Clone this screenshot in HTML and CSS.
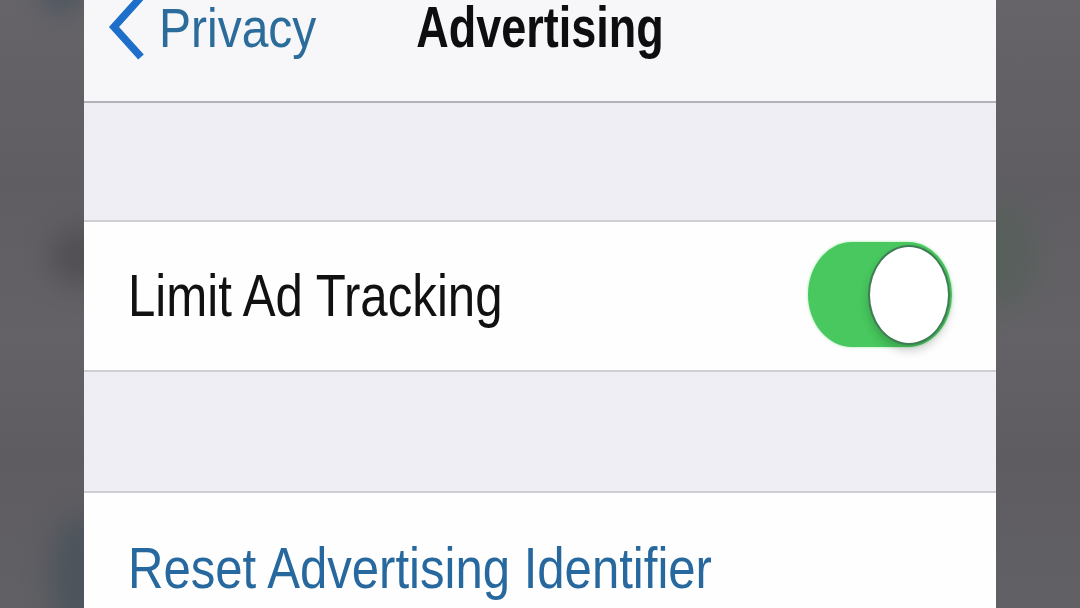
FILE: index.html
```html
<!DOCTYPE html>
<html lang="en">
<head>
<meta charset="utf-8">
<title>Advertising</title>
<link rel="stylesheet" href="styles.css">
</head>
<body>
  <div class="backdrop" aria-hidden="true">
    <span class="blob blob-top-left"></span>
    <span class="blob blob-mid-left"></span>
    <span class="blob blob-low-left"></span>
    <span class="blob blob-mid-right"></span>
  </div>

  <main class="screen">
    <header class="nav">
      <a class="back" href="#">
        <svg class="chevron" viewBox="0 0 40 60" width="40" height="60" aria-hidden="true">
          <polyline points="35,-3 8,27 35,57" fill="none" stroke="#1d6fc9" stroke-width="7.5" stroke-linejoin="miter" stroke-linecap="butt"/>
        </svg>
        <span class="back-label">Privacy</span>
      </a>
      <h1 class="title"><span>Advertising</span></h1>
      <div class="nav-spacer"></div>
    </header>

    <div class="group-gap"></div>

    <section class="cell">
      <span class="cell-label">Limit Ad Tracking</span>
      <span class="switch" role="switch" aria-checked="true"><span class="knob"></span></span>
    </section>

    <div class="group-gap group-gap-tall"></div>

    <section class="cell cell-last">
      <span class="cell-action">Reset Advertising Identifier</span>
    </section>
  </main>
</body>
</html>
```

FILE: styles.css
```css
* {
  box-sizing: border-box;
}

html,
body {
  margin: 0;
  height: 608px;
  overflow: hidden;
}

body {
  position: relative;
  display: flex;
  justify-content: center;
  background: linear-gradient(to bottom, #666468 0%, #5f5d62 30%, #646266 55%, #5e5c61 75%, #616064 100%);
  font-family: "Liberation Sans", Arial, sans-serif;
}

/* soft shapes in the dimmed surround */
.backdrop {
  position: absolute;
  inset: 0;
  z-index: 0;
  overflow: hidden;
}

.blob {
  position: absolute;
  border-radius: 50%;
  filter: blur(14px);
}

.blob-top-left {
  left: 40px;
  top: -30px;
  width: 44px;
  height: 42px;
  background: #42505c;
  opacity: 0.8;
}

.blob-mid-left {
  left: 50px;
  top: 228px;
  width: 60px;
  height: 58px;
  background: #4a484c;
  opacity: 0.7;
}

.blob-low-left {
  left: 50px;
  top: 512px;
  width: 60px;
  height: 130px;
  background: #45505a;
  opacity: 0.7;
}

.blob-mid-right {
  left: 966px;
  top: 200px;
  width: 70px;
  height: 110px;
  background: #56605a;
  opacity: 0.8;
}

.screen {
  position: relative;
  z-index: 1;
  width: 912px;
  height: 608px;
  overflow: hidden;
  display: flex;
  flex-direction: column;
  background: #efeef4;
}

/* navigation bar */
.nav {
  height: 103px;
  flex: none;
  display: grid;
  grid-template-columns: 1fr auto 1fr;
  align-items: start;
  padding-top: 1px;
  background: #f7f6f9;
  border-bottom: 2px solid #b3b2b6;
}

.back {
  display: flex;
  align-items: center;
  height: 54px;
  padding-left: 22px;
  text-decoration: none;
  color: #2a6c9c;
}

.chevron {
  display: block;
  flex: none;
  align-self: flex-start;
  margin-top: -1px;
}

.back-label {
  display: inline-block;
  margin-left: 13px;
  font-size: 48px;
  line-height: 42px;
  transform: scaleY(1.17);
  color: #2b6c9b;
}

.title {
  margin: 0;
  height: 54px;
  display: flex;
  align-items: center;
  font-size: 45px;
  line-height: 40px;
  font-weight: 700;
  color: #0e0e10;
}

.title span {
  display: inline-block;
  transform: scaleY(1.26);
}

/* grouped table */
.group-gap {
  height: 117px;
  flex: none;
}

.group-gap-tall {
  height: 119px;
}

.cell {
  height: 152px;
  flex: none;
  display: flex;
  align-items: center;
  justify-content: space-between;
  padding: 0 44px 0 44px;
  background: #fefefe;
  border-top: 2px solid #cfced3;
  border-bottom: 2px solid #cfced3;
}

.cell-last {
  flex: 1;
  height: auto;
  padding-top: 34px;
  border-bottom: 0;
}

.cell-label,
.cell-action {
  display: inline-block;
  line-height: 48px;
}

.cell-label {
  font-size: 49.2px;
  transform: scaleY(1.19);
  color: #111112;
}

.cell-action {
  font-size: 49.1px;
  transform: scaleY(1.16);
  color: #27699f;
}

/* on/off switch, shown on */
.switch {
  position: relative;
  flex: none;
  width: 144px;
  height: 105px;
  margin-top: -3px;
  border-radius: 44px / 52.5px;
  background: #48c85e;
  box-shadow: 0 0 3px rgba(90, 220, 110, 0.6);
}

.knob {
  position: absolute;
  top: 3px;
  right: 2px;
  width: 82px;
  height: 100px;
  border-radius: 50%;
  background: #ffffff;
  border: 2px solid #3f7c55;
  box-shadow: 0 6px 10px rgba(0, 0, 0, 0.18);
}
```
